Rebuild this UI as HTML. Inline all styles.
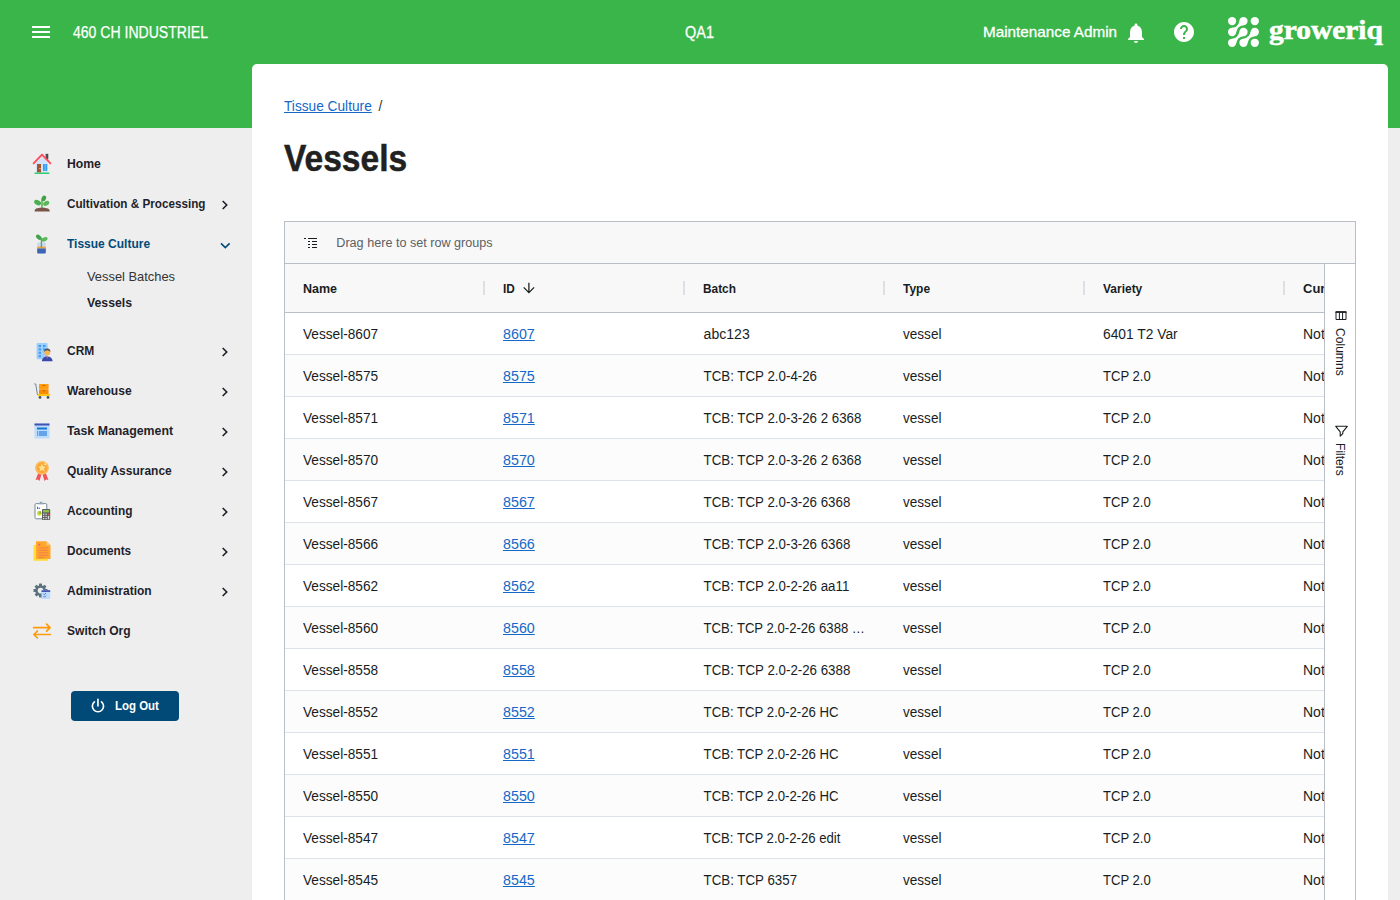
<!DOCTYPE html>
<html lang="en">
<head>
<meta charset="utf-8">
<title>Vessels</title>
<style>
*{box-sizing:border-box;margin:0;padding:0}
html,body{width:1400px;height:900px;overflow:hidden}
body{background:#eeeeee;font-family:"Liberation Sans",Arial,sans-serif;color:#212121;position:relative}
.abs{position:absolute}
#green{left:0;top:0;width:1400px;height:128px;background:#39b54a}
#card{left:252px;top:64px;width:1136px;height:836px;background:#fff;border-radius:5px 5px 0 0}
.hd{color:#fff;white-space:nowrap;line-height:20px}
#org{left:73px;top:22.500px;font-size:16px;-webkit-text-stroke:.25px #fff}
#env{left:685px;top:23px;font-size:16px;-webkit-text-stroke:.3px #fff}
#user{left:983px;top:22px;font-size:15px;-webkit-text-stroke:.3px #fff}
#brand{left:1268.5px;top:12px;font-family:"Liberation Serif","DejaVu Serif",serif;font-weight:bold;font-size:27px;line-height:36px;-webkit-text-stroke:.55px #fff;transform-origin:0 50%;transform:scaleX(1.09);color:#fff;white-space:nowrap}
/* sidebar */
.nav{left:67px;font-size:13px;font-weight:bold;line-height:16px;white-space:nowrap;color:#1f1f2b}
.nav.act{color:#014a7a}
.sub{left:87px;font-size:13px;line-height:16px;white-space:nowrap;color:#333}
.sub.b{font-weight:bold;color:#1f1f2b}
.chev{left:221px;width:8px;height:10px}
#logout{left:71px;top:691px;width:108px;height:30px;border-radius:4px;background:#014a78}
#logout span{position:absolute;left:44px;top:7px;font-size:13px;font-weight:bold;line-height:16px;color:#fff;white-space:nowrap}
/* content */
#crumb{left:284px;top:97px;font-size:14px;line-height:18px;white-space:nowrap}
#crumb a{color:#1568c8;text-decoration:underline}
#crumb i{font-style:normal;margin-left:7px;color:#333}
#title{left:284px;top:136px;-webkit-text-stroke:.5px #212121;font-size:37.800px;font-weight:bold;line-height:44px;color:#212121;white-space:nowrap;transform-origin:0 50%}
/* grid */
#grid{left:284px;top:221px;width:1072px;height:690px;border:1px solid #babfc7;background:#fff;overflow:hidden}
#rg{left:0;top:0;width:1070px;height:42px;background:#f8f8f8;border-bottom:1px solid #babfc7}
#rg span{position:absolute;left:52px;top:13px;font-size:12.5px;line-height:16px;color:#5c6064;white-space:nowrap}
#hdr{left:0;top:42px;width:1040px;height:49px;background:#f8f8f8;border-bottom:1px solid #babfc7}
.hc{position:absolute;top:17px;font-size:13px;font-weight:bold;line-height:16px;color:#181d1f;white-space:nowrap}
.hs{position:absolute;top:17px;width:2px;height:14px;background:#dcdfe3}
#rows{left:0;top:91px;width:1040px;height:600px;overflow:hidden}
.r{position:relative;height:42px;border-bottom:1px solid #dde2eb;background:#fff;font-size:14px;line-height:41px;color:#181d1f;white-space:nowrap}
.r:nth-child(even){background:#fcfcfc}
.r span{position:absolute;top:1px;height:41px}
.c0{left:18px}.c1{left:218px}.c2{left:418px}.c3{left:618px}.c4{left:818px}.c5{left:1018px}
.r a{color:#1568c8;text-decoration:underline}
#side{left:1039px;top:42px;width:31px;height:650px;border-left:1px solid #babfc7;background:#fff}
.vt{position:absolute;font-size:13px;line-height:13px;color:#181d1f;white-space:nowrap;transform-origin:0 0;transform:rotate(90deg) scaleX(.93)}
.hd,.nav,.sub,#logout span,#crumb,#rg span,.hc,.r span{transform-origin:0 50%}
/*FIT*/
#org{transform:translateX(0.00px) scaleX(0.8779)}
#env{transform:translateX(0.00px) scaleX(0.9031)}
#user{transform:translateX(0.00px) scaleX(1.0177)}
#n0{transform:translateX(0.00px) scaleX(0.9389)}
#n1{transform:translateX(0.00px) scaleX(0.9000)}
#n2{transform:translateX(0.00px) scaleX(0.9222)}
#s0{transform:translateX(0.00px) scaleX(0.9899)}
#s1{transform:translateX(0.00px) scaleX(0.9458)}
#n3{transform:translateX(0.00px) scaleX(0.9241)}
#n4{transform:translateX(0.00px) scaleX(0.9281)}
#n5{transform:translateX(0.00px) scaleX(0.9491)}
#n6{transform:translateX(0.00px) scaleX(0.9211)}
#n7{transform:translateX(0.00px) scaleX(0.9155)}
#n8{transform:translateX(0.00px) scaleX(0.9056)}
#n9{transform:translateX(0.00px) scaleX(0.9231)}
#n10{transform:translateX(0.00px) scaleX(0.9265)}
#logout span{transform:translateX(0.00px) scaleX(0.8820)}
#crumb{transform:translateX(0.00px) scaleX(0.9778)}
#title{transform:translateX(0.00px) scaleX(0.8875)}
#rg span{transform:translateX(-0.70px) scaleX(1.0091)}
#h0{transform:translateX(0.00px) scaleX(0.9617)}
#h1{transform:translateX(0.00px) scaleX(0.9077)}
#h2{transform:translateX(0.00px) scaleX(0.9111)}
#h3{transform:translateX(0.00px) scaleX(0.9233)}
#h4{transform:translateX(0.00px) scaleX(0.9209)}
.c0{transform:translateX(0.00px) scaleX(0.9753)}
.c1{transform:translateX(0.00px) scaleX(1.0200)}
.c3{transform:translateX(0.00px) scaleX(0.9692)}
.c4{transform:translateX(0.00px) scaleX(0.9345)}
.c2{transform:translateX(0.60px) scaleX(0.9506)}
/*ENDFIT*/
</style>
</head>
<body>
<div id="green" class="abs"></div>
<div id="card" class="abs"></div>

<!-- header -->
<svg class="abs" style="left:32px;top:26px" width="18" height="12" viewBox="0 0 18 12"><path d="M0 1h18M0 6h18M0 11h18" stroke="#fff" stroke-width="2"/></svg>
<div id="org" class="abs hd">460 CH INDUSTRIEL</div>
<div id="env" class="abs hd">QA1</div>
<div id="user" class="abs hd">Maintenance Admin</div>
<svg class="abs" style="left:1124px;top:21px" width="24" height="24" viewBox="0 0 24 24"><path fill="#fff" d="M12 22c1.100 0 2-.9 2-2h-4c0 1.100.9 2 2 2zm6-6v-5c0-3.070-1.630-5.640-4.500-6.320V4c0-.83-.67-1.500-1.500-1.500s-1.500.67-1.500 1.500v.68C7.640 5.360 6 7.920 6 11v5l-2 2v1h16v-1l-2-2z"/></svg>
<svg class="abs" style="left:1172px;top:20px" width="24" height="24" viewBox="0 0 24 24"><path fill="#fff" d="M12 2C6.480 2 2 6.480 2 12s4.480 10 10 10 10-4.480 10-10S17.520 2 12 2zm1 17h-2v-2h2v2zm2.070-7.750l-.9.920C13.450 12.900 13 13.500 13 15h-2v-.5c0-1.100.45-2.100 1.170-2.830l1.240-1.260c.37-.36.590-.86.590-1.410 0-1.100-.9-2-2-2s-2 .9-2 2H8c0-2.210 1.790-4 4-4s4 1.790 4 4c0 .88-.36 1.680-.93 2.250z"/></svg>
<div id="brand" class="abs">groweriq</div>

<!-- sidebar -->
<div id="n0" class="abs nav" style="top:156px">Home</div>
<div id="n1" class="abs nav" style="top:196px">Cultivation &amp; Processing</div>
<div id="n2" class="abs nav act" style="top:236px">Tissue Culture</div>
<div id="s0" class="abs sub" style="top:269px">Vessel Batches</div>
<div id="s1" class="abs sub b" style="top:295px">Vessels</div>
<div id="n3" class="abs nav" style="top:343px">CRM</div>
<div id="n4" class="abs nav" style="top:383px">Warehouse</div>
<div id="n5" class="abs nav" style="top:423px">Task Management</div>
<div id="n6" class="abs nav" style="top:463px">Quality Assurance</div>
<div id="n7" class="abs nav" style="top:503px">Accounting</div>
<div id="n8" class="abs nav" style="top:543px">Documents</div>
<div id="n9" class="abs nav" style="top:583px">Administration</div>
<div id="n10" class="abs nav" style="top:623px">Switch Org</div>
<div id="logout" class="abs"><span>Log Out</span></div>


<!-- logo -->
<svg class="abs" style="left:1226px;top:15px" width="36" height="34" viewBox="1226 15 36 34"><g fill="#fff" stroke="none"><circle cx="1232.1" cy="21.1" r="4.15"/><circle cx="1243.5" cy="21.1" r="4.15"/><circle cx="1254.8" cy="21.1" r="4.15"/><circle cx="1232.1" cy="32" r="4.15"/><circle cx="1243.5" cy="32" r="4.15"/><circle cx="1254.8" cy="32" r="4.15"/><circle cx="1232.1" cy="42.8" r="4.15"/><circle cx="1243.5" cy="42.8" r="4.15"/><circle cx="1254.8" cy="42.8" r="4.15"/></g><path id="bridges" fill="#fff" d="M1239.35 20.93Q1238.28 27.06 1232.12 27.85L1236.25 32.17Q1237.32 26.04 1243.48 25.25ZM1239.35 31.82Q1238.28 37.91 1232.14 38.65L1236.25 42.98Q1237.32 36.89 1243.46 36.15ZM1250.65 31.83Q1249.63 37.91 1243.52 38.65L1247.65 42.97Q1248.67 36.89 1254.78 36.15Z"/></svg>

<!-- sidebar icons -->
<svg class="abs" style="left:32px;top:153px" width="20" height="22" viewBox="32 153 20 22"><path d="M36 163.2L42 156.6L48 163.2V172.6H36z" fill="#cfe3fa"/><rect x="45.6" y="153.8" width="2.7" height="5.6" fill="#4a4a58"/><path d="M33.6 163.4L42 154.6L50.4 163.4" fill="none" stroke="#ff4d5a" stroke-width="1.9" stroke-linecap="round" stroke-linejoin="round"/><rect x="37" y="164" width="4" height="8.4" fill="#a5532e"/><circle cx="40" cy="168.6" r=".55" fill="#fff"/><rect x="43" y="164" width="4.2" height="6.8" fill="#2f9bf2"/><rect x="44.7" y="164" width=".8" height="6.8" fill="#8ccbfa"/><rect x="34.4" y="172.4" width="15.2" height="1.6" rx=".8" fill="#2fce6e"/></svg>

<svg class="abs" style="left:32px;top:194px" width="20" height="20" viewBox="32 194 20 20"><path d="M34.6 211.4Q34.4 208.6 37.6 208.2Q42 206.6 46.6 208.2Q49.8 208.6 49.8 211.4z" fill="#7b5549"/><path d="M42 208V199.5" stroke="#55ae4e" stroke-width="1.5" fill="none"/><ellipse cx="37.6" cy="202.6" rx="3.7" ry="2.5" transform="rotate(28 37.6 202.6)" fill="#4daf50"/><ellipse cx="46.2" cy="203.4" rx="3.3" ry="2.2" transform="rotate(-30 46.2 203.4)" fill="#5cb85c"/><ellipse cx="43.8" cy="198.4" rx="2.2" ry="2.9" transform="rotate(25 43.8 198.4)" fill="#43a047"/></svg>

<svg class="abs" style="left:33px;top:232px" width="18" height="23" viewBox="33 232 18 23"><rect x="37.2" y="242.6" width="8.6" height="10.8" rx="1.2" fill="#c9d9f0"/><rect x="37.2" y="246.6" width="8.6" height="2" fill="#f2a53b"/><path d="M37.2 248.6h8.600v3.600q0 1.200-1.200 1.200h-6.200q-1.200 0-1.200-1.200z" fill="#3c66b5"/><path d="M41.400 247.500V238" stroke="#55ae4e" stroke-width="1.300" fill="none"/><ellipse cx="38.8" cy="237.200" rx="3.200" ry="2" transform="rotate(40 38.8 237.200)" fill="#3fa34a"/><ellipse cx="44.600" cy="239.300" rx="3.200" ry="1.900" transform="rotate(-28 44.600 239.300)" fill="#5cb85c"/></svg>

<svg class="abs" style="left:35px;top:342px" width="19" height="21" viewBox="35 342 19 21"><rect x="36.600" y="343" width="11" height="16.200" rx="1" fill="#9dcdf8"/><g fill="#3f9cf2"><rect x="38.600" y="345" width="2.400" height="2"/><rect x="43" y="345" width="2.400" height="2"/><rect x="38.600" y="348.400" width="2.400" height="2"/><rect x="43" y="348.400" width="2.400" height="2"/><rect x="38.600" y="351.800" width="2.400" height="2"/><rect x="38.600" y="355.200" width="2.400" height="2"/></g><path d="M41.800 361.200q.4-4.600 5.400-4.800q5 .2 5.400 4.800z" fill="#3949ab"/><path d="M46.200 356.400h2l-1 2.600z" fill="#e05a6d"/><circle cx="47.300" cy="352.400" r="2.900" fill="#fdb44b"/><path d="M44.200 352q-.2-3.600 3.100-3.600q3.300 0 3.100 3.600q-1-1.800-3.100-1.800q-2.100 0-3.100 1.800z" fill="#46525c"/></svg>

<svg class="abs" style="left:33px;top:382px" width="19" height="18" viewBox="33 382 19 18"><path d="M34.200 383.800L35.800 384.200L37.400 394.600L39 395.400" fill="none" stroke="#6f8792" stroke-width="1"/><rect x="39" y="384" width="9.600" height="5" rx=".6" fill="#ff9d0a"/><rect x="39" y="389.300" width="9.600" height="4.900" rx=".6" fill="#fb8c00"/><rect x="42.400" y="385" width="2.800" height=".8" fill="#b35c00"/><rect x="42.400" y="390.400" width="2.800" height=".8" fill="#b35c00"/><rect x="38" y="394" width="12.200" height="2" rx=".6" fill="#ffc41a"/><circle cx="40" cy="397.400" r="1.400" fill="#46525c"/><circle cx="48" cy="397.400" r="1.400" fill="#46525c"/></svg>

<svg class="abs" style="left:34px;top:423px" width="16" height="16" viewBox="34 423 16 16"><rect x="34.500" y="423.500" width="15" height="15" fill="#bbdcfb"/><rect x="34.500" y="423.500" width="15" height="2" fill="#4151b5"/><rect x="37" y="427.500" width="10" height="2" fill="#1a74d2"/><rect x="37" y="431" width="10" height="5" fill="#64a2ea"/><rect x="38.300" y="431" width=".7" height="5" fill="#bbdcfb"/></svg>

<svg class="abs" style="left:34px;top:460px" width="16" height="22" viewBox="34 460 16 22"><path d="M38.200 473L41.400 474.400L39.500 481L37.900 479.400L35.600 480z" fill="#f2545b"/><path d="M45.800 473L42.600 474.400L44.500 481L46.100 479.400L48.400 480z" fill="#f2545b"/><circle cx="42" cy="467.800" r="6.900" fill="#fdbb5b"/><circle cx="42" cy="467.800" r="5.300" fill="#fba83a"/><path d="M42 463.800l1.200 2.500 2.700.4-2 1.900.5 2.700-2.400-1.300-2.400 1.300.5-2.700-2-1.900 2.700-.4z" fill="#ffe08a"/><circle cx="45.300" cy="464.200" r=".9" fill="#fff3d0"/></svg>

<svg class="abs" style="left:33px;top:500px" width="19" height="22" viewBox="33 500 19 22"><rect x="35" y="503.600" width="11.800" height="15.200" rx="1.200" fill="#fff" stroke="#748a95" stroke-width="1"/><path d="M38.400 504.200v-1.400h1.400q.2-1.400 1.200-1.400q1 0 1.200 1.400h1.400v1.400z" fill="#93a6af"/><rect x="37" y="506.800" width="1.100" height="2.200" fill="#1a74d2"/><rect x="38.700" y="507.600" width="1.100" height="1.400" fill="#1a74d2"/><circle cx="39.200" cy="513.400" r="2.300" fill="#cddc39"/><path d="M39.200 513.400v-2.300a2.300 2.300 0 0 1 2.300 2.300z" fill="#7cb342"/><rect x="42" y="509" width="8.200" height="11" rx=".9" fill="#5c5c5c"/><rect x="43" y="510" width="6.200" height="2.400" fill="#8bc34a"/><g fill="#d9d9d9"><rect x="43" y="513.600" width="1.400" height="1.300"/><rect x="45.400" y="513.600" width="1.400" height="1.300"/><rect x="43" y="515.800" width="1.400" height="1.300"/><rect x="45.400" y="515.800" width="1.400" height="1.300"/><rect x="43" y="518" width="1.400" height="1.300"/><rect x="45.400" y="518" width="1.400" height="1.300"/><rect x="47.800" y="515.800" width="1.400" height="3.500"/></g><rect x="47.800" y="513.600" width="1.400" height="1.300" fill="#ef5350"/></svg>

<svg class="abs" style="left:33px;top:540px" width="19" height="22" viewBox="33 540 19 22"><rect x="33.500" y="545" width="14.500" height="15.800" fill="#ffdd3c"/><path d="M36 541.200h10.400l4.100 4.100v13.700h-14.500z" fill="#ffa62b"/><path d="M46.400 541.200l4.100 4.100h-4.100z" fill="#ffc978"/><rect x="38.400" y="543.800" width="1.800" height="1.800" fill="#ec5f7d"/><g stroke="#f07a55" stroke-width=".9"><path d="M38.400 548h9.800M38.400 550.400h9.800M38.400 552.800h9.800M38.400 555.200h9.800M38.400 557.300h6"/></g></svg>

<svg class="abs" style="left:32px;top:581px" width="20" height="20" viewBox="32 581 20 20"><g transform="translate(40.500 590.600)"><g fill="#5a727e"><rect x="-1.500" y="-7" width="3" height="14" rx=".5"/><rect x="-1.500" y="-7" width="3" height="14" rx=".5" transform="rotate(45)"/><rect x="-1.500" y="-7" width="3" height="14" rx=".5" transform="rotate(90)"/><rect x="-1.500" y="-7" width="3" height="14" rx=".5" transform="rotate(135)"/><circle r="5.300"/></g><circle r="2.800" fill="#eeeeee"/></g><rect x="41.500" y="590.300" width="8.700" height="8.600" rx=".6" fill="#bbdcfb"/><rect x="41.500" y="590.300" width="8.700" height="1.600" fill="#3949ab"/><path d="M43.600 593.800l.8.800 1.500-1.500M43.600 596.400l.8.800 1.500-1.500" fill="none" stroke="#3949ab" stroke-width=".8"/></svg>

<svg class="abs" style="left:32px;top:622px" width="20" height="18" viewBox="32 622 20 18"><path d="M33.600 627.600H50.100M46.600 624.100L50.100 627.600L46.600 631.100M50.400 634.500H33.900M37.400 631L33.900 634.500L37.400 638" fill="none" stroke="#ff9a0c" stroke-width="1.700" stroke-linecap="round" stroke-linejoin="round"/></svg>

<!-- chevrons -->
<svg class="abs" style="left:220px;top:199px" width="10" height="12" viewBox="0 0 10 12"><path d="M2.700 2L6.700 6L2.700 10" fill="none" stroke="#1f1f2b" stroke-width="1.600"/></svg>
<svg class="abs" style="left:219px;top:240px" width="12" height="10" viewBox="0 0 12 10"><path d="M2 3.400L6.300 7.600L10.600 3.400" fill="none" stroke="#014a7a" stroke-width="1.600"/></svg>
<svg class="abs" style="left:220px;top:346px" width="10" height="12" viewBox="0 0 10 12"><path d="M2.700 2L6.700 6L2.700 10" fill="none" stroke="#1f1f2b" stroke-width="1.600"/></svg>
<svg class="abs" style="left:220px;top:386px" width="10" height="12" viewBox="0 0 10 12"><path d="M2.700 2L6.700 6L2.700 10" fill="none" stroke="#1f1f2b" stroke-width="1.600"/></svg>
<svg class="abs" style="left:220px;top:426px" width="10" height="12" viewBox="0 0 10 12"><path d="M2.700 2L6.700 6L2.700 10" fill="none" stroke="#1f1f2b" stroke-width="1.600"/></svg>
<svg class="abs" style="left:220px;top:466px" width="10" height="12" viewBox="0 0 10 12"><path d="M2.700 2L6.700 6L2.700 10" fill="none" stroke="#1f1f2b" stroke-width="1.600"/></svg>
<svg class="abs" style="left:220px;top:506px" width="10" height="12" viewBox="0 0 10 12"><path d="M2.700 2L6.700 6L2.700 10" fill="none" stroke="#1f1f2b" stroke-width="1.600"/></svg>
<svg class="abs" style="left:220px;top:546px" width="10" height="12" viewBox="0 0 10 12"><path d="M2.700 2L6.700 6L2.700 10" fill="none" stroke="#1f1f2b" stroke-width="1.600"/></svg>
<svg class="abs" style="left:220px;top:586px" width="10" height="12" viewBox="0 0 10 12"><path d="M2.700 2L6.700 6L2.700 10" fill="none" stroke="#1f1f2b" stroke-width="1.600"/></svg>

<!-- power icon -->
<svg class="abs" style="left:90px;top:698px" width="16" height="16" viewBox="90 698 16 16"><path d="M94.400 701.800A5.600 5.600 0 1 0 101.500 701.800M97.950 699.200V706" fill="none" stroke="#fff" stroke-width="1.650" stroke-linecap="round"/></svg>

<!-- content -->
<div id="crumb" class="abs"><a>Tissue Culture</a><i>/</i></div>
<div id="title" class="abs">Vessels</div>

<div id="grid" class="abs">
 <div id="rg" class="abs"><svg class="abs" style="left:19px;top:16px" width="14" height="11" viewBox="0 0 14 11" shape-rendering="crispEdges"><path fill="#181d1f" d="M0 0h2v1h-2zM4 0h9v1h-9zM4 3h2v1h-2zM8 3h5v1h-5zM4 6h2v1h-2zM8 6h5v1h-5zM4 9h2v1h-2zM8 9h5v1h-5z"/></svg><span>Drag here to set row groups</span></div>
 <div id="hdr" class="abs">
  <div id="h0" class="hc" style="left:18px">Name</div>
  <div id="h1" class="hc" style="left:218px">ID</div>
  <svg class="abs" style="left:237px;top:17px" width="14" height="14" viewBox="522 281 14 14"><path d="M528.9 282.8V292.600M523.700 287.400L528.900 292.600L534.100 287.400" fill="none" stroke="#181d1f" stroke-width="1.250"/></svg>
  <div id="h2" class="hc" style="left:418px">Batch</div>
  <div id="h3" class="hc" style="left:618px">Type</div>
  <div id="h4" class="hc" style="left:818px">Variety</div>
  <div id="h5" class="hc" style="left:1018px">Current</div>
  <i class="hs" style="left:198px"></i><i class="hs" style="left:398px"></i><i class="hs" style="left:598px"></i><i class="hs" style="left:798px"></i><i class="hs" style="left:998px"></i>
 </div>
 <div id="rows" class="abs">
  <div class="r"><span class="c0">Vessel-8607</span><span class="c1"><a>8607</a></span><span class="c2" style="transform:translateX(.6px) scaleX(1.004)">abc123</span><span class="c3">vessel</span><span class="c4" style="transform:translateX(0.00px) scaleX(0.9855)">6401 T2 Var</span><span class="c5">Not</span></div>
  <div class="r"><span class="c0">Vessel-8575</span><span class="c1"><a>8575</a></span><span class="c2">TCB: TCP 2.0-4-26</span><span class="c3">vessel</span><span class="c4">TCP 2.0</span><span class="c5">Not</span></div>
  <div class="r"><span class="c0">Vessel-8571</span><span class="c1"><a>8571</a></span><span class="c2">TCB: TCP 2.0-3-26 2 6368</span><span class="c3">vessel</span><span class="c4">TCP 2.0</span><span class="c5">Not</span></div>
  <div class="r"><span class="c0">Vessel-8570</span><span class="c1"><a>8570</a></span><span class="c2">TCB: TCP 2.0-3-26 2 6368</span><span class="c3">vessel</span><span class="c4">TCP 2.0</span><span class="c5">Not</span></div>
  <div class="r"><span class="c0">Vessel-8567</span><span class="c1"><a>8567</a></span><span class="c2">TCB: TCP 2.0-3-26 6368</span><span class="c3">vessel</span><span class="c4">TCP 2.0</span><span class="c5">Not</span></div>
  <div class="r"><span class="c0">Vessel-8566</span><span class="c1"><a>8566</a></span><span class="c2">TCB: TCP 2.0-3-26 6368</span><span class="c3">vessel</span><span class="c4">TCP 2.0</span><span class="c5">Not</span></div>
  <div class="r"><span class="c0">Vessel-8562</span><span class="c1"><a>8562</a></span><span class="c2">TCB: TCP 2.0-2-26 aa11</span><span class="c3">vessel</span><span class="c4">TCP 2.0</span><span class="c5">Not</span></div>
  <div class="r"><span class="c0">Vessel-8560</span><span class="c1"><a>8560</a></span><span class="c2" style="transform:translateX(.6px) scaleX(.937)">TCB: TCP 2.0-2-26 6388 …</span><span class="c3">vessel</span><span class="c4">TCP 2.0</span><span class="c5">Not</span></div>
  <div class="r"><span class="c0">Vessel-8558</span><span class="c1"><a>8558</a></span><span class="c2">TCB: TCP 2.0-2-26 6388</span><span class="c3">vessel</span><span class="c4">TCP 2.0</span><span class="c5">Not</span></div>
  <div class="r"><span class="c0">Vessel-8552</span><span class="c1"><a>8552</a></span><span class="c2" style="transform:translateX(.6px) scaleX(.941)">TCB: TCP 2.0-2-26 HC</span><span class="c3">vessel</span><span class="c4">TCP 2.0</span><span class="c5">Not</span></div>
  <div class="r"><span class="c0">Vessel-8551</span><span class="c1"><a>8551</a></span><span class="c2" style="transform:translateX(.6px) scaleX(.941)">TCB: TCP 2.0-2-26 HC</span><span class="c3">vessel</span><span class="c4">TCP 2.0</span><span class="c5">Not</span></div>
  <div class="r"><span class="c0">Vessel-8550</span><span class="c1"><a>8550</a></span><span class="c2" style="transform:translateX(.6px) scaleX(.941)">TCB: TCP 2.0-2-26 HC</span><span class="c3">vessel</span><span class="c4">TCP 2.0</span><span class="c5">Not</span></div>
  <div class="r"><span class="c0">Vessel-8547</span><span class="c1"><a>8547</a></span><span class="c2" style="transform:translateX(.6px) scaleX(.938)">TCB: TCP 2.0-2-26 edit</span><span class="c3">vessel</span><span class="c4">TCP 2.0</span><span class="c5">Not</span></div>
  <div class="r"><span class="c0">Vessel-8545</span><span class="c1"><a>8545</a></span><span class="c2">TCB: TCP 6357</span><span class="c3">vessel</span><span class="c4">TCP 2.0</span><span class="c5">Not</span></div>
 </div>
 <div id="side" class="abs">
  <svg class="abs" style="left:10px;top:46px" width="13" height="11" viewBox="1335 310 13 11"><path d="M1336 312h10v7.500h-10zM1339.400 312v7.500M1342.600 312v7.500" fill="none" stroke="#181d1f" stroke-width="1"/><path d="M1335.500 311.200h11v1.600h-11z" fill="#181d1f"/></svg>
  <div id="vt0" class="vt" style="left:22.300px;top:63.700px">Columns</div>
  <svg class="abs" style="left:9px;top:160px" width="15" height="14" viewBox="1334 424 15 14"><path d="M1335.800 426.300H1347.300L1342.800 431.800V433.700L1340.200 436.200V431.800z" fill="none" stroke="#181d1f" stroke-width="1.100" stroke-linejoin="round"/></svg>
  <div id="vt1" class="vt" style="left:22.300px;top:178.700px">Filters</div>
 </div>
</div>
</body>
</html>
